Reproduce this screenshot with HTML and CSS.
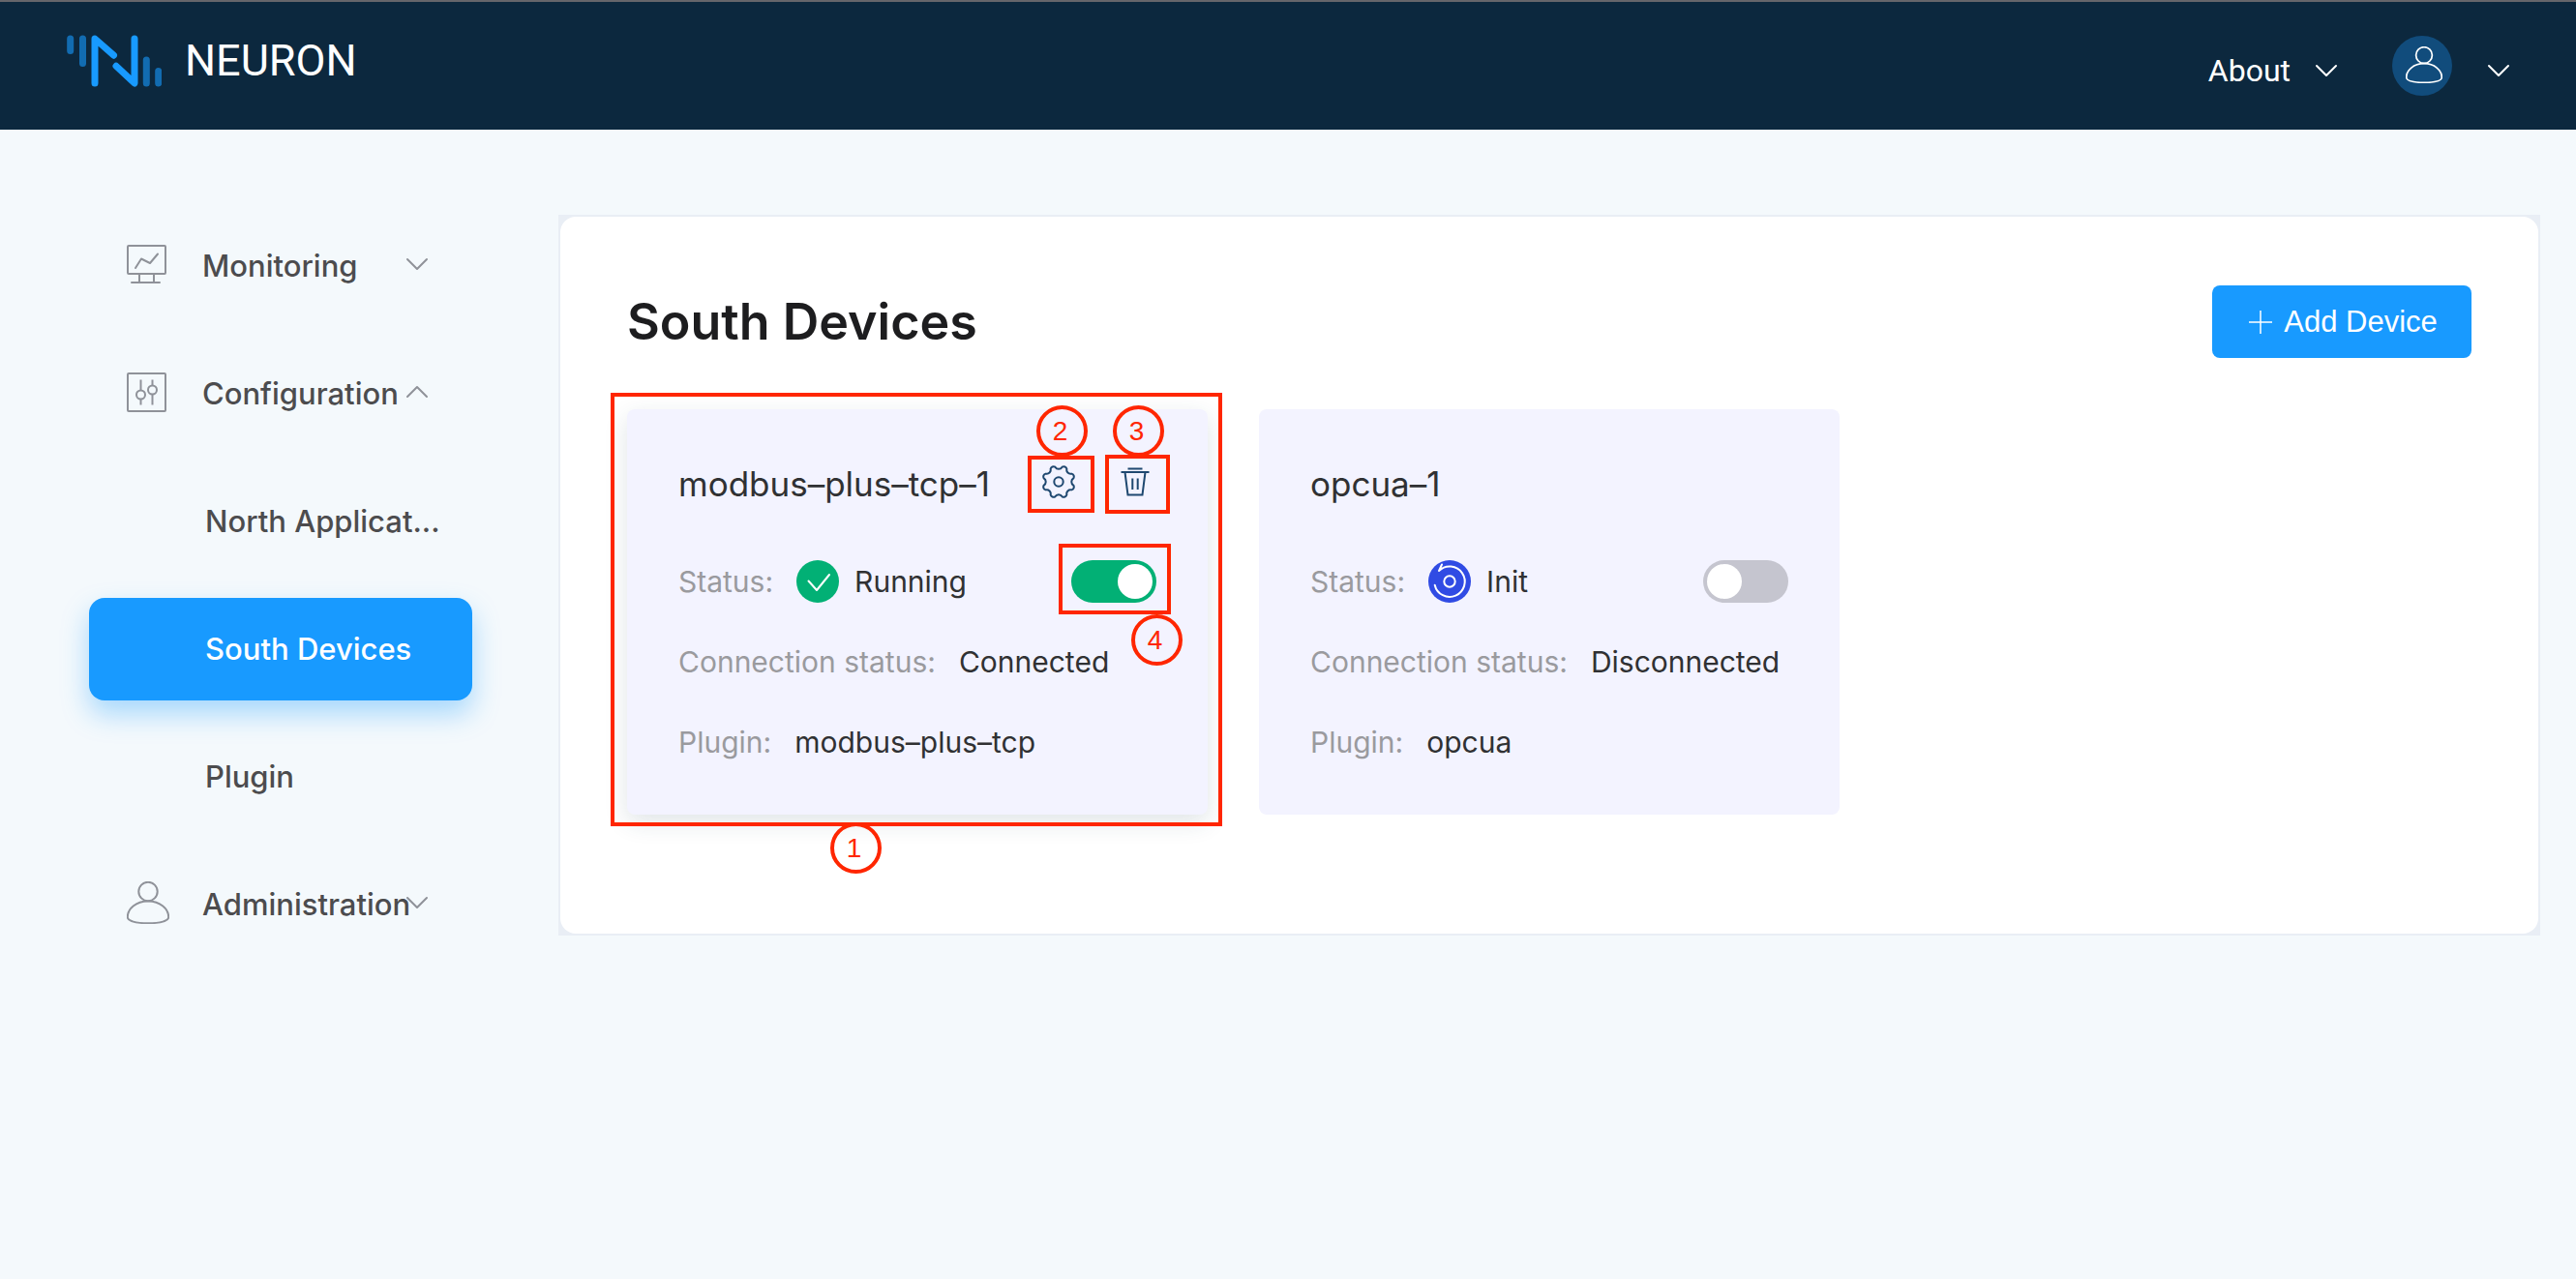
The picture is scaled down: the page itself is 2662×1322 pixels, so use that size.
FILE: index.html
```
<!DOCTYPE html>
<html lang="en">
<head>
  <meta charset="utf-8">
  <meta name="viewport" content="width=device-width, initial-scale=1">
  <title>Neuron - South Devices</title>
  <link rel="stylesheet" href="styles.css">
</head>
<body>
  <svg width="0" height="0" class="sprite" aria-hidden="true">
    <symbol id="icon-down" viewBox="0 0 24 14">
      <path d="M2 2 12 12 22 2" fill="none" stroke="currentColor" stroke-linecap="round" stroke-linejoin="round"/>
    </symbol>
    <symbol id="icon-up" viewBox="0 0 24 14">
      <path d="M2 12 12 2 22 12" fill="none" stroke="currentColor" stroke-linecap="round" stroke-linejoin="round"/>
    </symbol>
    <symbol id="icon-user" viewBox="0 0 44 44">
      <circle cx="22" cy="10.5" r="9.7" fill="none" stroke="currentColor"/>
      <path d="M22 20.500c12.500 0 21.200 8 21.200 16.500 0 4-8.700 6.200-21.200 6.200S.8 41 .8 37C.8 28.500 9.500 20.500 22 20.500z" fill="none" stroke="currentColor"/>
    </symbol>
  </svg>

  <header class="topbar">
    <a class="brand" href="#">
      <svg class="brand-mark" viewBox="0 0 98 54" fill="none" stroke="#189aff" stroke-width="7" stroke-linecap="round" stroke-linejoin="round" aria-hidden="true">
        <g opacity=".6"><path d="M3.700 4v12.500M16.500 4v25.500M82.300 26v24M94.700 37.500V50"/></g>
        <path d="M29 50V4l19.500 17.200M51 32.300 70 50V4"/>
      </svg>
      <span>NEURON</span>
    </a>
    <nav class="topnav">
      <button class="topnav-btn topnav-text" type="button">About
        <svg class="chev"><use href="#icon-down"/></svg>
      </button>
      <button class="topnav-btn" type="button" aria-label="Account">
        <span class="avatar"><svg><use href="#icon-user"/></svg></span>
        <svg class="chev"><use href="#icon-down"/></svg>
      </button>
    </nav>
  </header>

  <div class="layout">
    <nav class="sidebar">
      <a class="item" href="#">
        <svg class="item-icon" viewBox="0 0 44 44" fill="none" stroke="currentColor" aria-hidden="true">
          <rect x="1" y="3" width="39" height="29" rx="1"/><path d="M13 32h15v9H13zM5 41h29M9 26l6-9.500 9 4.500 8-9.500" stroke-linecap="round" stroke-linejoin="round"/>
        </svg>
        <span class="item-text">Monitoring</span>
        <svg class="caret"><use href="#icon-down"/></svg>
      </a>
      <a class="item" href="#">
        <svg class="item-icon" viewBox="0 0 44 44" fill="none" stroke="currentColor" aria-hidden="true">
          <rect x="1" y="3" width="39" height="39" rx="1"/><circle cx="14.500" cy="25" r="4.500"/><circle cx="26.500" cy="20" r="4.500"/><path d="M14.500 9.500v11M14.500 29.500v6M26.500 9.500v6M26.500 24.500v11"/>
        </svg>
        <span class="item-text">Configuration</span>
        <svg class="caret"><use href="#icon-up"/></svg>
      </a>
      <a class="item sub" href="#">North Applicat...</a>
      <a class="item sub active" href="#" aria-current="page">South Devices</a>
      <a class="item sub" href="#">Plugin</a>
      <a class="item" href="#">
        <svg class="item-icon"><use href="#icon-user"/></svg>
        <span class="item-text">Administration</span>
        <svg class="caret"><use href="#icon-down"/></svg>
      </a>
    </nav>

    <main class="panel">
      <div class="panel-body">
        <div class="panel-head">
          <h1>South Devices</h1>
          <button class="add" type="button">
            <svg viewBox="0 0 24 24" fill="none" stroke="currentColor" stroke-width="1.500" aria-hidden="true"><path d="M12 0v24M0 12h24"/></svg>
            Add Device
          </button>
        </div>

        <div class="cards">
          <article class="card raised">
            <div class="card-head">
              <h2>modbus–plus–tcp–1</h2>
              <div class="tools">
                <button type="button" aria-label="Configure">
                  <svg viewBox="-18 -18 36 36" fill="none" stroke="currentColor" stroke-width="2" stroke-linejoin="round" aria-hidden="true">
                    <path d="M3.600-15.300A3.200 3.200 0 0 1 8.400-13.300 4 4 0 0 0 13.300-8.400 3.200 3.200 0 0 1 15.300-3.600 4.200 4.200 0 0 0 15.300 3.600 3.200 3.200 0 0 1 13.300 8.400 4 4 0 0 0 8.400 13.300 3.200 3.200 0 0 1 3.600 15.300 4.200 4.200 0 0 0-3.600 15.300 3.200 3.200 0 0 1-8.400 13.300 4 4 0 0 0-13.300 8.400 3.200 3.200 0 0 1-15.300 3.600 4.200 4.200 0 0 0-15.300-3.600 3.200 3.200 0 0 1-13.300-8.400 4 4 0 0 0-8.400-13.300 3.200 3.200 0 0 1-3.600-15.300 4.200 4.200 0 0 0 3.600-15.300z"/>
                    <circle r="4.700"/>
                  </svg>
                </button>
                <button type="button" aria-label="Delete">
                  <svg viewBox="-18 -18 36 36" fill="none" stroke="currentColor" stroke-width="2" aria-hidden="true">
                    <path d="M-7.500-13.500h15M-14.500-10h29M-10.500-10-7.500 13.500h15L10.500-10M-2.700-3.500V8M2.700-3.500V8"/>
                  </svg>
                </button>
              </div>
            </div>
            <div class="row">
              <span class="label">Status:</span>
              <svg class="state" viewBox="-22 -22 44 44" aria-hidden="true"><circle r="22" fill="#02b075"/><path d="M-9.500-.5-1 9 12-7" fill="none" stroke="#fff" stroke-width="2" stroke-linecap="round" stroke-linejoin="round"/></svg>
              <span class="value">Running</span>
              <input class="switch" type="checkbox" role="switch" aria-label="Run modbus-plus-tcp-1" checked>
            </div>
            <div class="row"><span class="label">Connection status:</span><span class="value">Connected</span></div>
            <div class="row"><span class="label">Plugin:</span><span class="value">modbus–plus–tcp</span></div>

            <div class="mark mark-card"></div>
            <div class="mark mark-gear"></div>
            <div class="mark mark-trash"></div>
            <div class="mark mark-switch"></div>
            <span class="mark num num-1">1</span>
            <span class="mark num num-2">2</span>
            <span class="mark num num-3">3</span>
            <span class="mark num num-4">4</span>
          </article>

          <article class="card">
            <div class="card-head"><h2>opcua–1</h2></div>
            <div class="row">
              <span class="label">Status:</span>
              <svg class="state" viewBox="-22 -22 44 44" aria-hidden="true"><circle r="22" fill="#304be4"/><g fill="none" stroke="#fff" stroke-width="2" stroke-linecap="round" stroke-linejoin="round"><circle r="5.700"/><path d="M-8-17.500-11-11A15.700 15.700 0 1 1-15.300 3.700"/></g></svg>
              <span class="value">Init</span>
              <input class="switch" type="checkbox" role="switch" aria-label="Run opcua-1">
            </div>
            <div class="row"><span class="label">Connection status:</span><span class="value">Disconnected</span></div>
            <div class="row"><span class="label">Plugin:</span><span class="value">opcua</span></div>
          </article>
        </div>
      </div>
    </main>
  </div>
</body>
</html>
```
FILE: styles.css
```
* { box-sizing: border-box; }

body {
  margin: 0;
  min-height: 100vh;
  background: #f4f9fc;
  color: #303133;
  font: 400 30px/44px Inter, "Noto Sans", sans-serif;
}

a { color: inherit; text-decoration: none; }
button { border: 0; padding: 0; background: none; color: inherit; font: inherit; cursor: pointer; }
h1, h2 { margin: 0; }
svg { display: block; flex: none; }
.sprite { position: absolute; }

/* Top bar */
.topbar {
  display: flex;
  justify-content: space-between;
  height: 134px;
  padding: 0 68px 0 69px;
  border-top: 2px solid #66666b;
  background: #0c283e;
  color: #fff;
  font-family: Roboto, sans-serif;
}
.brand { display: flex; align-items: center; gap: 24px; height: 122px; font-size: 45px; }
.brand-mark { width: 98px; height: 54px; }
.topnav { display: flex; gap: 56px; height: 134px; padding-bottom: 2px; }
.topnav-btn { display: flex; align-items: center; gap: 36px; font-size: 32px; padding-top: 9px; }
.topnav-text { gap: 25px; }
.chev { width: 24px; height: 14px; stroke-width: 2; }
.avatar {
  display: grid;
  place-items: center;
  width: 62px;
  height: 62px;
  margin-bottom: 9px;
  border-radius: 50%;
  background: #114c7c;
}
.avatar svg { width: 38px; height: 38px; margin-left: 3px; margin-bottom: 3px; stroke-width: 2; }

/* Page columns */
.layout { display: grid; grid-template-columns: 396px minmax(0, 1fr); gap: 89px; align-items: start; padding: 88px 37px 88px 92px; }

/* Side menu */
.sidebar { display: flex; flex-direction: column; gap: 26px; color: #4c4c4e; font-size: 31px; font-weight: 500; }
.item { display: flex; align-items: center; height: 106px; padding-left: 39px; border-radius: 16px; white-space: nowrap; }
.item-icon { width: 44px; height: 44px; margin: 0 34px 4px 0; color: #8f9299; stroke-width: 2; }
.item-text { width: 210px; }
.caret { width: 24px; height: 14px; margin-bottom: 4px; color: #8f9299; stroke-width: 2; }
.sub { padding-left: 120px; }
.active { background: #189aff; color: #fff; box-shadow: 0 14px 28px rgba(24, 154, 255, 0.35); }

/* Main panel */
.panel { padding: 2px; background: #e9eef5; }
.panel-body { padding: 71px 69px 123px; border-radius: 16px; background: #fff; }
.panel-head { display: flex; align-items: center; justify-content: space-between; margin-bottom: 53px; }
h1 { color: #1d1d1f; font-size: 52px; font-weight: 600; }
.add {
  display: flex;
  align-items: center;
  justify-content: center;
  gap: 12px;
  width: 268px;
  height: 75px;
  padding-left: 3px;
  border-radius: 8px;
  background: #189aff;
  color: #fff;
  font-family: "Liberation Sans", Arial, sans-serif;
  font-size: 31px;
}
.add svg { width: 24px; height: 24px; }

/* Device cards */
.cards { display: grid; grid-template-columns: repeat(auto-fill, 600px); gap: 53px; }
.card { position: relative; display: flex; flex-direction: column; gap: 39px; padding: 55px 53px; border-radius: 8px; background: #f3f3ff; }
.card { padding-bottom: 53px; }
.raised { box-shadow: 0 8px 24px rgba(32, 72, 88, 0.14); }
.card-head { display: flex; align-items: center; justify-content: space-between; margin-bottom: 18px; }
h2 { font-size: 35px; font-weight: 400; }
.tools { display: flex; gap: 43px; margin: 0 4px 5px 0; color: #1f4870; }
.tools svg { width: 36px; height: 36px; }
.row { display: flex; align-items: center; height: 44px; }
.label { margin-right: 24px; color: #9a9a9e; }
.state { width: 44px; height: 44px; margin-right: 16px; }

.switch {
  appearance: none;
  width: 88px;
  height: 44px;
  margin: 0 0 0 auto;
  padding: 4px;
  border-radius: 22px;
  background: #c5c5cf;
}
.switch::before { content: ""; display: block; width: 36px; height: 36px; border-radius: 50%; background: #fff; }
.switch:checked { background: #02b075; }
.switch:checked::before { margin-left: auto; }

/* Numbered call-outs over the first card */
.mark { position: absolute; border: 4px solid #ff2600; pointer-events: none; }
.mark-card { left: -17px; top: -17px; width: 632px; height: 448px; }
.mark-gear { left: 414px; top: 48px; width: 69px; height: 59px; }
.mark-trash { left: 494px; top: 47px; width: 67px; height: 61px; }
.mark-switch { left: 446px; top: 139px; width: 116px; height: 73px; }
.num {
  width: 53px;
  height: 53px;
  border-radius: 50%;
  color: #ff2600;
  font: 28px/46px "Liberation Sans", Arial, sans-serif;
  text-align: center;
  padding-right: 4px;
}
.num-1 { left: 210px; top: 427px; }
.num-2 { left: 423px; top: -4px; }
.num-3 { left: 502px; top: -4px; }
.num-4 { left: 521px; top: 212px; }
```
